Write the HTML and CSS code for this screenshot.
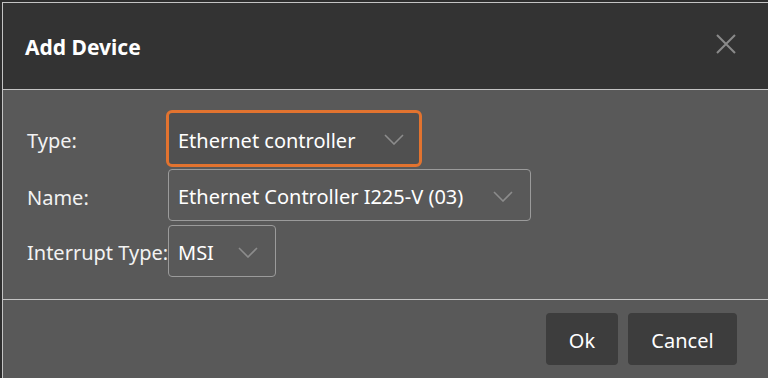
FILE: index.html
```html
<!DOCTYPE html>
<html>
<head>
<meta charset="utf-8">
<link rel="stylesheet" href="styles.css">
</head>
<body>
<div class="dialog">
  <div class="header">
    <h1 class="title">Add Device</h1>
    <button class="close" aria-label="Close">
      <svg width="22" height="22" viewBox="0 0 22 22"><path d="M2 2L20 20M20 2L2 20" stroke="#8a8a8a" stroke-width="2" fill="none"/></svg>
    </button>
  </div>
  <div class="body">
    <div class="form">
      <label class="label">Type:</label>
      <div class="cell"><div class="select focused"><span class="value">Ethernet controller</span><svg class="chev" width="20" height="11" viewBox="0 0 20 11"><path d="M1 1L10 10L19 1" stroke="#8c8c8c" stroke-width="1.6" fill="none"/></svg></div></div>
      <label class="label">Name:</label>
      <div class="cell"><div class="select"><span class="value">Ethernet Controller I225-V (03)</span><svg class="chev" width="20" height="11" viewBox="0 0 20 11"><path d="M1 1L10 10L19 1" stroke="#8c8c8c" stroke-width="1.6" fill="none"/></svg></div></div>
      <label class="label">Interrupt Type:</label>
      <div class="cell"><div class="select short"><span class="value">MSI</span><svg class="chev" width="20" height="11" viewBox="0 0 20 11"><path d="M1 1L10 10L19 1" stroke="#8c8c8c" stroke-width="1.6" fill="none"/></svg></div></div>
    </div>
  </div>
  <div class="footer">
    <button class="btn ok">Ok</button>
    <button class="btn cancel">Cancel</button>
  </div>
</div>
</body>
</html>
```
FILE: styles.css
```css
html, body {
  margin: 0;
  padding: 0;
  height: 100%;
  overflow: hidden;
  background: #2e2e2e;
  font-family: "Noto Sans", "Open Sans", sans-serif;
}
.dialog {
  margin: 2px 0 0 2px;
  border-top: 1px solid #c4c4c4;
  border-left: 1px solid #c4c4c4;
  height: calc(100% - 3px);
  background: #595959;
  display: flex;
  flex-direction: column;
}
.header {
  flex: none;
  background: #333333;
  height: 86px;
  border-bottom: 1px solid #c4c4c4;
  display: flex;
  align-items: center;
  justify-content: space-between;
  padding: 0 31px 0 22px;
  box-sizing: content-box;
}
.title {
  margin: 0;
  padding-top: 2px;
  color: #ffffff;
  font-size: 21px;
  font-weight: 700;
}
.close {
  background: none;
  border: none;
  padding: 0;
  width: 22px;
  height: 22px;
  margin-top: -4px;
}
.body {
  flex: none;
  height: 210px;
  border-bottom: 1px solid #c4c4c4;
  padding: 20px 0 0 24px;
  box-sizing: border-box;
}
.form {
  display: grid;
  grid-template-columns: 141px auto;
  align-items: center;
  row-gap: 2px;
}
.label {
  color: #f2f2f2;
  font-size: 20px;
  white-space: nowrap;
  padding-top: 4px;
}
.cell {
  display: flex;
}
.select {
  display: flex;
  align-items: center;
  height: 52px;
  box-sizing: border-box;
  border: 1px solid #9b9b9b;
  border-radius: 4px;
  padding: 0 17px 0 9px;
  color: #ffffff;
  font-size: 20px;
  gap: 30px;
  white-space: nowrap;
}
.select.short {
  gap: 24px;
  margin-top: 2px;
}
.value {
  padding-top: 3px;
}
.select.focused {
  border: 3px solid #e2732f;
  border-radius: 6px;
  height: 57px;
  margin-left: -2px;
  padding: 0 15px 0 9px;
  gap: 29px;
  background: #505050;
}
.chev {
  margin-top: 2px;
}
.footer {
  flex: 1;
  display: flex;
  justify-content: flex-end;
  align-items: flex-start;
  padding: 13px 31px 0 0;
  gap: 10px;
}
.btn {
  height: 52px;
  border: none;
  border-radius: 4px;
  background: #3d3d3d;
  color: #ffffff;
  font-family: inherit;
  font-size: 20px;
  padding: 3px 0 0;
}
.ok { width: 72px; }
.cancel { width: 109px; }
```
